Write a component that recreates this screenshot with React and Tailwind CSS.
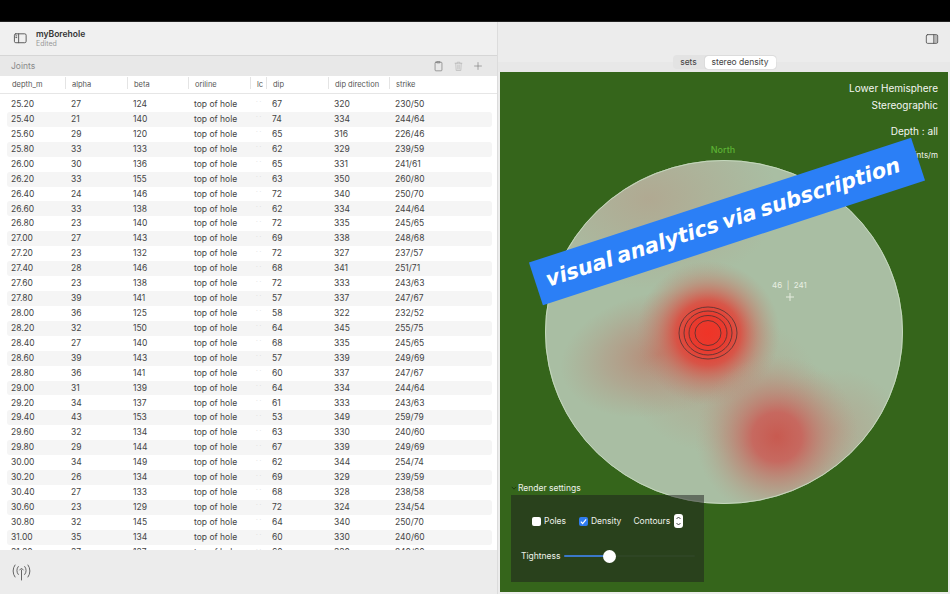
import React from "react";

const rows = [
  ["25.20", 27, 124, 67, 320, "230/50"], ["25.40", 21, 140, 74, 334, "244/64"], ["25.60", 29, 120, 65, 316, "226/46"],
  ["25.80", 33, 133, 62, 329, "239/59"], ["26.00", 30, 136, 65, 331, "241/61"], ["26.20", 33, 155, 63, 350, "260/80"],
  ["26.40", 24, 146, 72, 340, "250/70"], ["26.60", 33, 138, 62, 334, "244/64"], ["26.80", 23, 140, 72, 335, "245/65"],
  ["27.00", 27, 143, 69, 338, "248/68"], ["27.20", 23, 132, 72, 327, "237/57"], ["27.40", 28, 146, 68, 341, "251/71"],
  ["27.60", 23, 138, 72, 333, "243/63"], ["27.80", 39, 141, 57, 337, "247/67"], ["28.00", 36, 125, 58, 322, "232/52"],
  ["28.20", 32, 150, 64, 345, "255/75"], ["28.40", 27, 140, 68, 335, "245/65"], ["28.60", 39, 143, 57, 339, "249/69"],
  ["28.80", 36, 141, 60, 337, "247/67"], ["29.00", 31, 139, 64, 334, "244/64"], ["29.20", 34, 137, 61, 333, "243/63"],
  ["29.40", 43, 153, 53, 349, "259/79"], ["29.60", 32, 134, 63, 330, "240/60"], ["29.80", 29, 144, 67, 339, "249/69"],
  ["30.00", 34, 149, 62, 344, "254/74"], ["30.20", 26, 134, 69, 329, "239/59"], ["30.40", 27, 133, 68, 328, "238/58"],
  ["30.60", 23, 129, 72, 324, "234/54"], ["30.80", 32, 145, 64, 340, "250/70"], ["31.00", 35, 134, 60, 330, "240/60"],
  ["31.20", 37, 137, 60, 330, "240/60"],
];

const headers = ["depth_m", "alpha", "beta", "oriline", "lc", "dip", "dip direction", "strike"];
const grid = "grid grid-cols-[60px_62px_61px_62px_16px_62px_61px_1fr]";

const Stroke = ({ className, children, viewBox = "0 0 16 16" }) => (
  <svg className={className} viewBox={viewBox} fill="none" stroke="currentColor" strokeWidth="1" strokeLinecap="round" strokeLinejoin="round">
    {children}
  </svg>
);

function Disc() {
  return (
    <svg className="absolute left-[44px] top-[87px] w-[360px] h-[346px]" viewBox="0 0 360 346">
      <defs>
        <clipPath id="d"><ellipse cx="180" cy="173" rx="179" ry="172" /></clipPath>
        <radialGradient id="r1">
          <stop offset="0" stopColor="#ef3427" />
          <stop offset="0.25" stopColor="#e93a2e" />
          <stop offset="0.45" stopColor="#dd4a3e" stopOpacity="0.88" />
          <stop offset="0.7" stopColor="#c9705f" stopOpacity="0.5" />
          <stop offset="1" stopColor="#b8907c" stopOpacity="0" />
        </radialGradient>
        <radialGradient id="r2">
          <stop offset="0" stopColor="#c85a50" />
          <stop offset="0.3" stopColor="#c9625a" stopOpacity="0.92" />
          <stop offset="0.62" stopColor="#bd8272" stopOpacity="0.55" />
          <stop offset="1" stopColor="#b3a28c" stopOpacity="0" />
        </radialGradient>
        <radialGradient id="r3">
          <stop offset="0" stopColor="#bb7a68" stopOpacity="0.8" />
          <stop offset="0.55" stopColor="#b59280" stopOpacity="0.5" />
          <stop offset="1" stopColor="#b09a85" stopOpacity="0" />
        </radialGradient>
        <radialGradient id="r4">
          <stop offset="0" stopColor="#b3a28c" stopOpacity="0.75" />
          <stop offset="1" stopColor="#b3a28c" stopOpacity="0" />
        </radialGradient>
      </defs>
      <g clipPath="url(#d)">
        <rect width="360" height="346" fill="#a9bea3" />
        <ellipse cx="105" cy="40" rx="130" ry="90" fill="url(#r4)" />
        <ellipse cx="180" cy="225" rx="95" ry="70" fill="url(#r4)" />
        <ellipse cx="290" cy="270" rx="70" ry="60" fill="url(#r4)" />
        <ellipse cx="115" cy="195" rx="100" ry="62" transform="rotate(-12 115 195)" fill="url(#r3)" />
        <ellipse cx="164" cy="174" rx="72" ry="72" fill="url(#r1)" />
        <ellipse cx="233" cy="278" rx="82" ry="82" fill="url(#r2)" />
      </g>
      <ellipse cx="180" cy="173" rx="178.5" ry="171.5" fill="none" stroke="#c4d8bc" strokeWidth="1" />
      <g fill="none" stroke="#4b3232" strokeWidth="0.8">
        <ellipse cx="164" cy="174" rx="29" ry="26" />
        <ellipse cx="164" cy="174" rx="24" ry="22" />
        <ellipse cx="164" cy="174" rx="19" ry="17.5" />
        <ellipse cx="164" cy="174" rx="13" ry="12.5" />
      </g>
      <path d="M246 134v8M242 138h8" stroke="#e6ecdf" strokeWidth="1" />
    </svg>
  );
}

export default function App() {
  return (
    <div className="w-[950px] h-[594px] overflow-hidden flex flex-col bg-black font-['Inter','Liberation_Sans',sans-serif]">
      <div className="h-[22px] shrink-0 bg-black border-b border-[#222]" />
      <div className="flex-1 min-h-0 flex">
        {/* left */}
        <div className="w-[498px] shrink-0 flex flex-col bg-white border-r border-[#dcdcdc]">
          <div className="h-[34px] shrink-0 flex items-center bg-[#f0f0f0] border-b border-[#d6d6d6]">
            <Stroke className="ml-[13px] w-[15px] h-[15px] text-[#555]">
              <rect x="1.5" y="3" width="12.5" height="9.5" rx="1.5" />
              <path d="M6 3v9.5M3 5.2h1M3 7h1" />
            </Stroke>
            <div className="ml-[8px] leading-none">
              <div className="text-[8.5px] font-semibold text-[#333]">myBorehole</div>
              <div className="text-[7px] text-[#999] mt-[2px]">Edited</div>
            </div>
          </div>
          <div className="h-[20px] shrink-0 flex items-center bg-[#e8e8e8] pl-[11px] pr-[14px]">
            <span className="text-[8.5px] text-[#8a8a8a]">Joints</span>
            <div className="ml-auto flex items-center gap-[9px] text-[#777]">
              <Stroke className="w-[11px] h-[12px]">
                <rect x="3" y="2.5" width="10" height="12.5" rx="1.2" />
                <path d="M6 1.5h4v2H6z" />
              </Stroke>
              <Stroke className="w-[11px] h-[12px] text-[#b5b5b5]">
                <path d="M3 4h10M6 4V2.5h4V4M4 4l.6 10.5h6.8L12 4M7 6.5v6M9 6.5v6" />
              </Stroke>
              <Stroke className="w-[10px] h-[10px]">
                <path d="M8 2.5v11M2.5 8h11" />
              </Stroke>
            </div>
          </div>
          <div className={`${grid} h-[18px] shrink-0 items-center pl-[12px] border-b border-[#e6e6e6] text-[7.5px] text-[#555]`}>
            {headers.map((h, i) => (
              <div key={h} className="relative">
                {h}
                {i < 7 && <span className="absolute right-[6px] top-[-2px] h-[12px] w-px bg-[#e4e4e4]" />}
              </div>
            ))}
          </div>
          <div className="flex-1 min-h-0 overflow-hidden pl-[7px] pr-[5px] pt-[3px]">
            {rows.map((r, i) => (
              <div key={r[0]} className={`${grid} h-[14.93px] items-center pl-[4px] rounded-[3px] text-[8.5px] text-[#444] ${i % 2 ? "bg-[#f5f5f5]" : ""}`}>
                <div>{r[0]}</div>
                <div>{r[1]}</div>
                <div>{r[2]}</div>
                <div>top of hole</div>
                <div className="text-[#cfcfcf] text-[6px] leading-none -mt-[4px]">· ·</div>
                <div>{r[3]}</div>
                <div>{r[4]}</div>
                <div>{r[5]}</div>
              </div>
            ))}
          </div>
          <div className="h-[44px] shrink-0 bg-[#ececec] flex items-center pl-[11px]">
            <Stroke className="w-[21px] h-[18px] text-[#666]" viewBox="0 0 21 18">
              <path d="M10.5 7v10" />
              <path d="M8.7 7l1.8-1.8L12.3 7" />
              <path d="M7.3 11.5a6 6 0 0 1 0-8M13.7 3.5a6 6 0 0 1 0 8" />
              <path d="M4 14a10 10 0 0 1 0-12M17 2a10 10 0 0 1 0 12" />
            </Stroke>
          </div>
        </div>

        {/* right */}
        <div className="flex-1 min-w-0 flex flex-col bg-[#ececec]">
          <div className="h-[33px] shrink-0 flex items-center justify-end pr-[11px]">
            <Stroke className="w-[14px] h-[14px] text-[#555]">
              <rect x="1.5" y="3" width="13" height="10" rx="1.5" />
              <path d="M10 3v10" />
              <path d="M10.5 3.5h3.5v9h-3.5z" fill="currentColor" fillOpacity="0.35" stroke="none" />
            </Stroke>
          </div>
          <div className="h-[17px] shrink-0 flex justify-center bg-[linear-gradient(#ececec_7px,#e8e8e8_7px)]">
            <div className="h-[14px] flex items-center rounded-[4px] bg-[#e3e3e3] text-[8.5px] text-[#444]">
              <div className="w-[32px] text-center">sets</div>
              <div className="w-[71px] h-[13px] flex items-center justify-center rounded-[3px] bg-white shadow-[0_0_1px_rgba(0,0,0,0.3)]">stereo density</div>
            </div>
          </div>
          <div className="flex-1 min-h-0 mx-[2px] mb-[2px] bg-[#35651b] relative overflow-hidden text-white">
            <Disc />
            <div className="absolute left-0 top-[71px] w-[446px] text-center text-[9px] font-medium text-[#5cb234]">North</div>
            <div className="absolute right-[10px] top-[8px] text-right text-[10px] text-[#f4f6f1]">
              <div className="h-[17px] leading-[17px]">Lower Hemisphere</div>
              <div className="h-[17px] leading-[17px]">Stereographic</div>
              <div className="h-[17px] leading-[17px] mt-[9px]">Depth : all</div>
              <div className="h-[12px] leading-[12px] mt-[9px] text-[8px]">points/m</div>
            </div>
            <div className="absolute left-[272px] top-[207px] text-[8px] text-[#e8eee2] whitespace-pre">46  |  241</div>
            <div className="absolute left-[26px] top-[127px] w-[402px] h-[45px] pr-[8px] rotate-[-18.1deg] bg-[#2b7ff6] flex items-center justify-center text-white text-[21px] font-bold italic [word-spacing:-2.7px] font-['DejaVu_Sans',sans-serif] whitespace-nowrap">
              visual analytics via subscription
            </div>
            <div className="absolute left-[11px] top-[410px] flex items-center text-[8.5px] text-[#eef2ea]">
              <svg className="w-[6px] h-[6px] mr-[1px] text-[#1d3a10]" viewBox="0 0 8 8" fill="none" stroke="currentColor" strokeWidth="1.3"><path d="M1 2.5l3 3 3-3" /></svg>
              Render settings
            </div>
            <div className="absolute left-[11px] top-[423px] w-[193px] h-[87px] bg-[rgba(30,30,30,0.5)] text-[8.5px] text-[#eef2ea]">
              <div className="flex items-center h-[14px] mt-[19px] pl-[21px]">
                <span className="w-[9px] h-[9px] rounded-[2px] bg-white" />
                <span className="ml-[3px]">Poles</span>
                <span className="ml-[13px] w-[9px] h-[9px] rounded-[2px] bg-[#2f7cf0] flex items-center justify-center">
                  <svg className="w-[7px] h-[7px]" viewBox="0 0 8 8" fill="none" stroke="white" strokeWidth="1.4"><path d="M1 4.2l2 2.2L7 1.5" /></svg>
                </span>
                <span className="ml-[3px]">Density</span>
                <span className="ml-[12px]">Contours</span>
                <span className="ml-[4px] w-[9px] h-[14px] rounded-[3px] bg-white flex items-center justify-center">
                  <svg className="w-[7px] h-[12px]" viewBox="0 0 7 12" fill="none" stroke="#333" strokeWidth="0.9"><path d="M1.5 4l2-2 2 2M1.5 8l2 2 2-2" /></svg>
                </span>
              </div>
              <div className="flex items-center h-[14px] mt-[21px] pl-[10px]">
                <span className="w-[43px]">Tightness</span>
                <div className="relative w-[131px] h-[2px] bg-[#2e4524] rounded-full">
                  <div className="absolute left-0 top-0 h-[2px] w-[45px] bg-[#3b78c9] rounded-full" />
                  <div className="absolute left-[39px] top-[-5.5px] w-[13px] h-[13px] rounded-full bg-white" />
                </div>
              </div>
            </div>
          </div>
        </div>
      </div>
    </div>
  );
}
